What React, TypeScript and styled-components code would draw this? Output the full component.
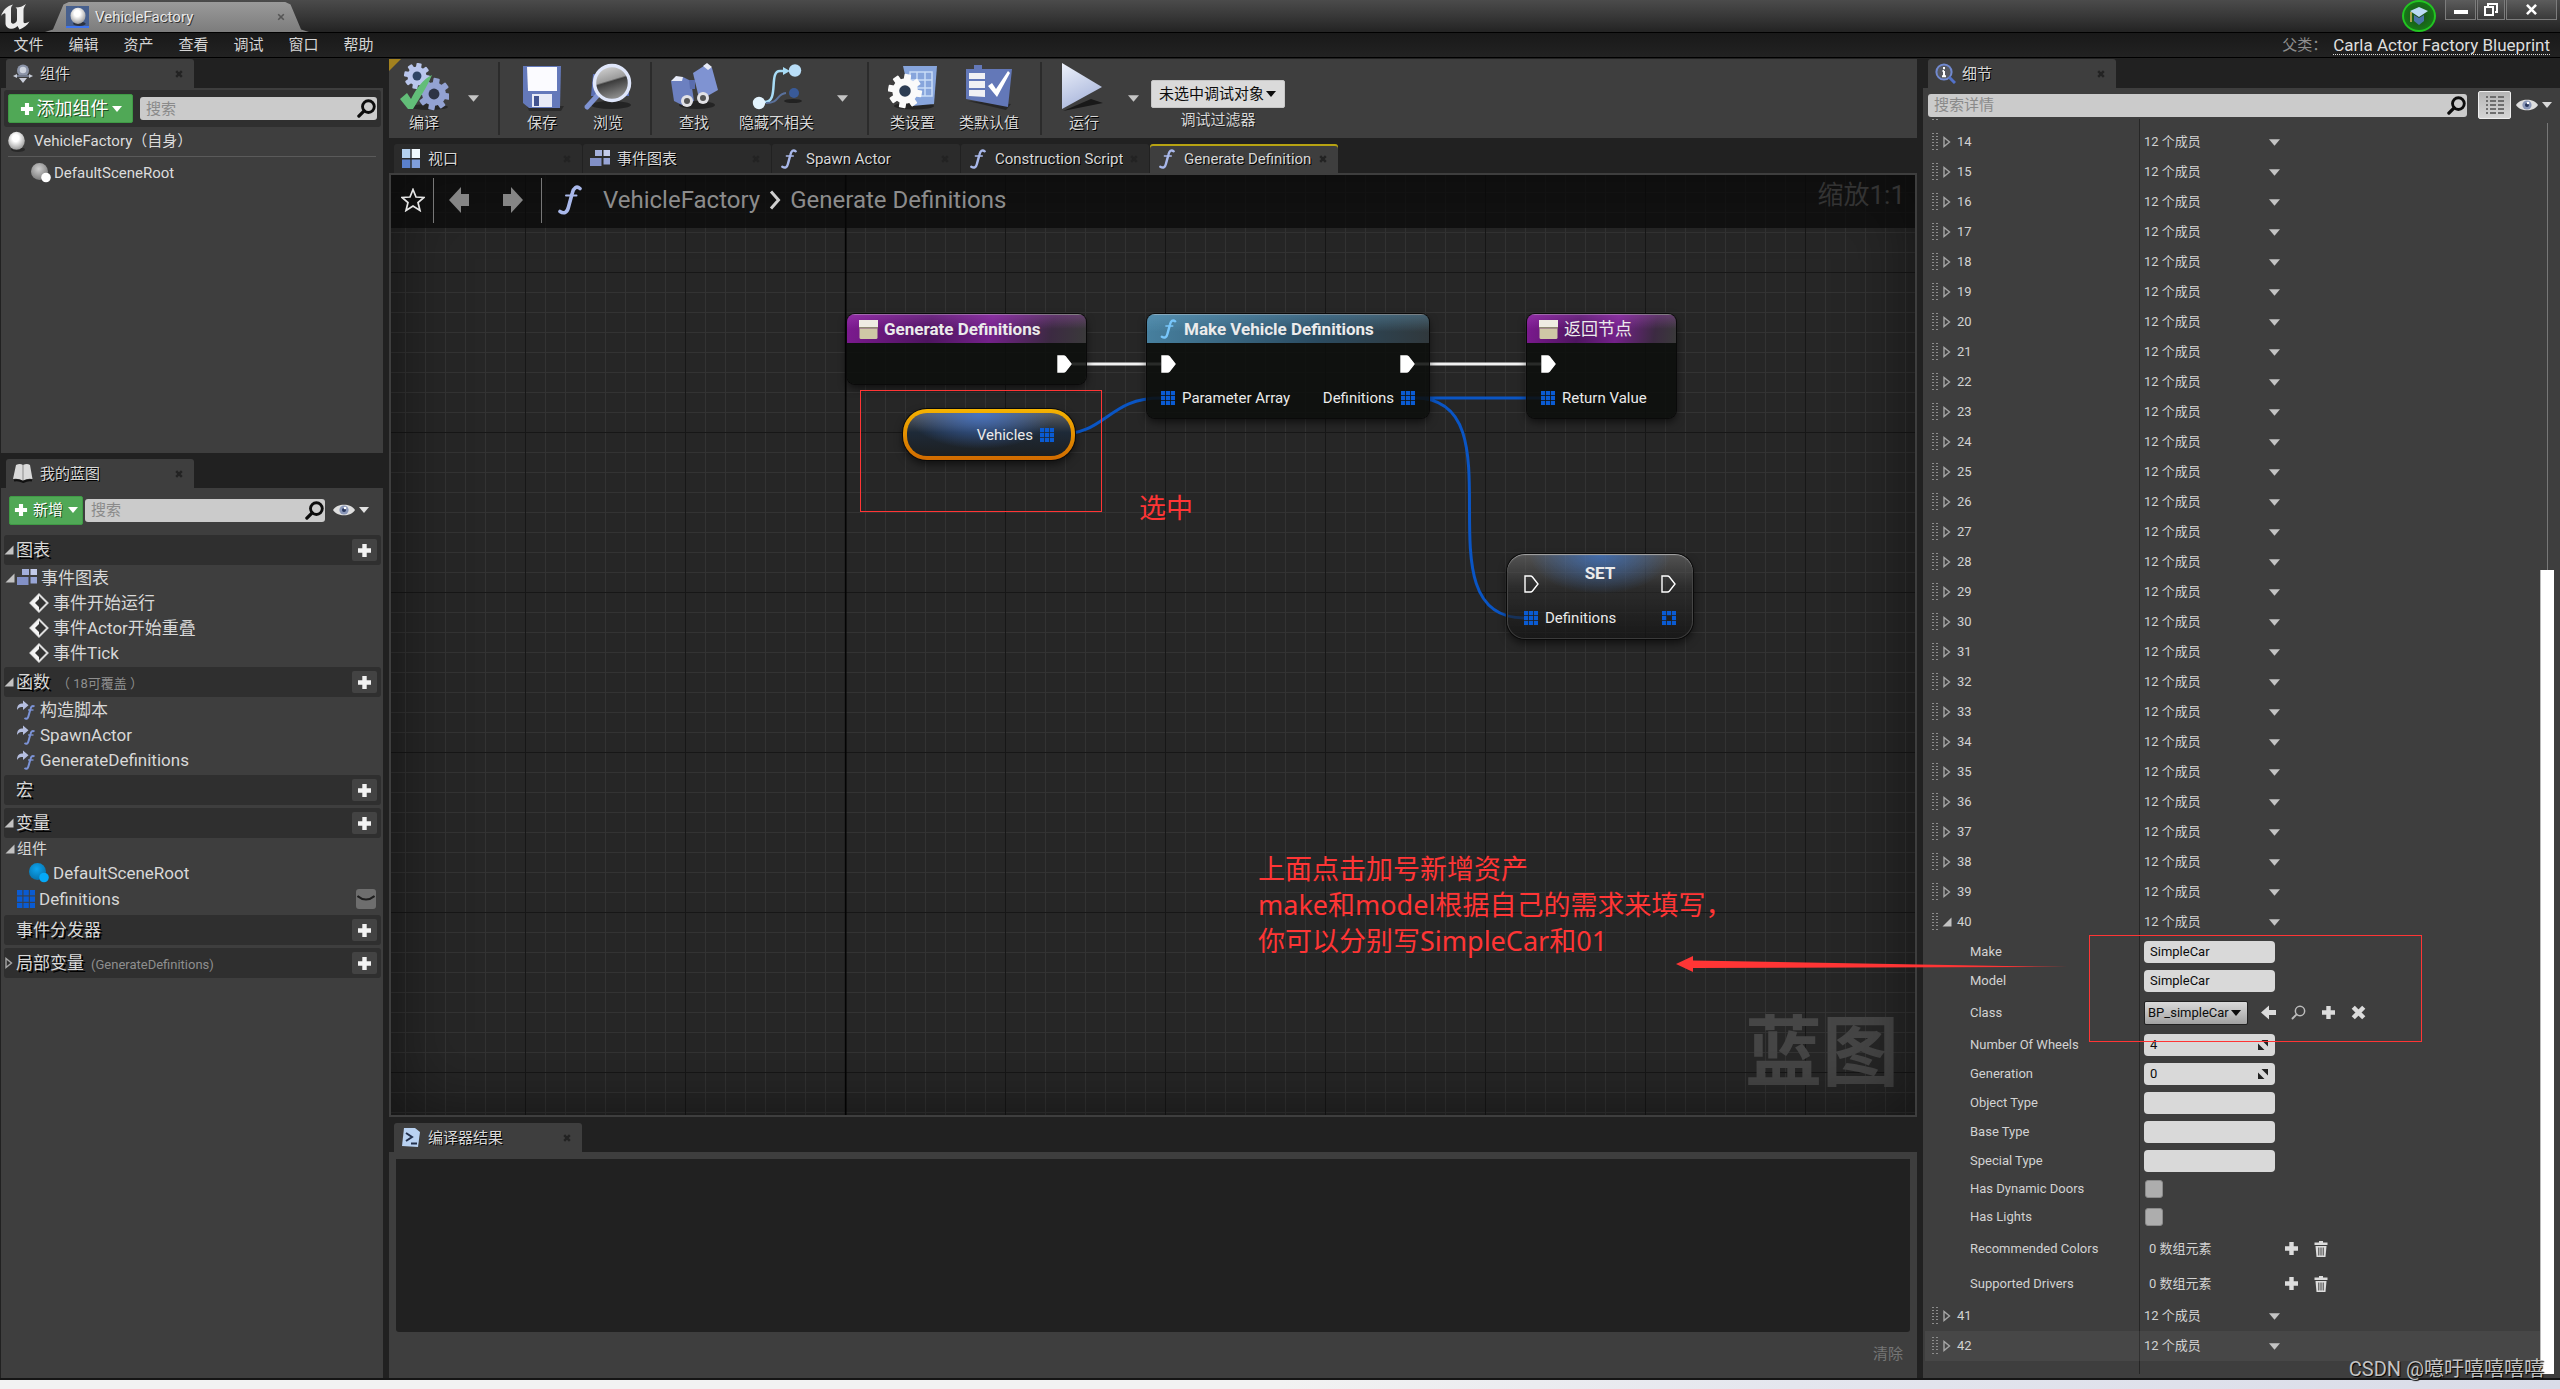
import React, { useId } from 'react';
import styled, { createGlobalStyle, css } from 'styled-components';

const GlobalStyle = createGlobalStyle`
  *, *::before, *::after { box-sizing: border-box; }
  body {
    margin: 0;
    background: #212121;
    color: #d8d8d8;
    font-family: Roboto, "Noto Sans CJK SC", sans-serif;
    font-size: 15px;
    line-height: 20px;
  }
  button, input, select { font: inherit; color: inherit; margin: 0; }
  button { padding: 0; border: 0; background: none; cursor: pointer; }
  svg { display: block; flex: none; }
`;

/* ---------- icons ---------- */

const Caret = ({ size = 12, color = '#c4c4c4' }: { size?: number; color?: string }) => (
  <svg width={size} height={size} viewBox="0 0 12 12"><path d="M0 2.5h12L6 9.5z" fill={color} /></svg>
);

const Plus = ({ size = 15, color = '#f2f2f2' }: { size?: number; color?: string }) => (
  <svg width={size} height={size} viewBox="0 0 15 15">
    <path d="M5.3 1h4.4v4.3H14v4.4H9.7V14H5.3V9.7H1V5.3h4.3z" fill={color} />
  </svg>
);

const Cross = ({ size = 9, color = '#232323', width = 3 }: { size?: number; color?: string; width?: number }) => (
  <svg width={size} height={size} viewBox="0 0 10 10"><path d="M1.5 1.5l7 7M8.5 1.5l-7 7" stroke={color} strokeWidth={width} /></svg>
);

const Magnifier = ({ size = 19, color = '#0c0c0c', width = 3 }: { size?: number; color?: string; width?: number }) => (
  <svg width={size} height={size} viewBox="0 0 20 20" fill="none" stroke={color} strokeWidth={width}>
    <circle cx="12" cy="8" r="6.2" />
    <path d="M7.5 12.5L2 18" strokeWidth={width + 0.5} strokeLinecap="round" />
  </svg>
);

const Eye = () => (
  <svg width="22" height="14" viewBox="0 0 22 14">
    <path d="M0 7C4 0 18 0 22 7C18 14 4 14 0 7z" fill="#dedede" />
    <circle cx="11" cy="7" r="4.6" fill="#8a97b8" />
    <circle cx="11" cy="7" r="2" fill="#26355c" />
    <circle cx="12" cy="5" r="1.3" fill="#fff" />
  </svg>
);

const FuncIcon = ({ w = 18, h = 22, color = '#a9b8ea' }: { w?: number; h?: number; color?: string }) => (
  <svg width={w} height={h} viewBox="0 0 24 30" fill="none" stroke={color} strokeLinecap="round">
    <path d="M22 3.5C18.5 0.5 15.5 3 14.3 8L10.5 22C9.3 27 6.5 29.5 2 26.5" strokeWidth="3.6" />
    <path d="M8 10.5h10.5" strokeWidth="2" />
  </svg>
);

const FuncArrowIcon = () => (
  <svg width="20" height="20" viewBox="0 0 20 20" fill="none">
    <path d="M1 10C1 5 3 3.5 7 3.5V0.5L12.5 5.3L7 10V7C4 7 2.5 7.5 1 10z" fill="#b6bfe0" />
    <path d="M18.5 6.5C16 5 15 7 14.5 9L12.5 16C12 18.5 10.5 19.5 8.5 18" stroke="#7c93d6" strokeWidth="2" />
    <path d="M12 10h5.5" stroke="#7c93d6" strokeWidth="1.3" />
  </svg>
);

const GraphIcon = () => (
  <svg width="20" height="17" viewBox="0 0 20 17">
    <rect x="5" y="0" width="7" height="6" fill="#a4b0dc" />
    <rect x="13.5" y="0" width="6.5" height="6" fill="#c3cbea" />
    <rect x="0" y="8" width="11.5" height="8" fill="#8290c6" />
    <rect x="13.5" y="8" width="6.5" height="6.5" fill="#98a5d6" />
  </svg>
);

const ViewportIcon = () => (
  <svg width="18" height="19" viewBox="0 0 18 19">
    <rect width="8.3" height="9" fill="#b4d0ee" />
    <rect x="9.7" width="8.3" height="9" fill="#f2faff" />
    <rect y="10.5" width="8.3" height="8.5" fill="#5a80cc" />
    <rect x="9.7" y="10.5" width="8.3" height="8.5" fill="#7f9edb" />
  </svg>
);

const ArrayIcon = ({ size = 14, hollow = false }: { size?: number; hollow?: boolean }) => (
  <svg width={size} height={size} viewBox="0 0 14 14" fill="#0a5bd3">
    {[0, 1, 2].map((r) =>
      [0, 1, 2].map((c) =>
        hollow && r === 1 && c === 1 ? null : <rect key={`${r}${c}`} x={c * 5} y={r * 5} width="4.2" height="4.2" />,
      ),
    )}
  </svg>
);

const ExecPin = ({ open = false }: { open?: boolean }) => (
  <svg width="15" height="18" viewBox="0 0 15 18">
    <path
      d="M1 1h5.5c1 0 1.5 0.4 2 1L14 9l-5.5 7c-0.500 0.600-1 1-2 1H1z"
      fill={open ? 'none' : '#fff'} stroke="#fff" strokeWidth="1.4"
    />
  </svg>
);

const BoxIcon = () => (
  <svg width="19" height="19" viewBox="0 0 19 19">
    <rect width="19" height="7" fill="#efece2" />
    <rect y="7" width="19" height="1.5" fill="#8d8870" />
    <path d="M0.500 8.500h18V17.500q0 1.500-1.500 1.500H2q-1.500 0-1.500-1.500z" fill="#cfc8a6" />
  </svg>
);

const Sphere = ({ w = 17, h = 21 }: { w?: number; h?: number }) => (
  <svg width={w} height={h} viewBox="0 0 17 21">
    <defs>
      <radialGradient id="sphere" cx="0.45" cy="0.35" r="0.65">
        <stop offset="0.3" stopColor="#fff" /><stop offset="1" stopColor="#9a9a9a" />
      </radialGradient>
    </defs>
    <ellipse cx="10" cy="18.5" rx="7" ry="2.5" fill="#1f1f1f" opacity="0.7" />
    <ellipse cx="8.5" cy="9.8" rx="8.3" ry="9" fill="url(#sphere)" />
  </svg>
);

const SceneRootIcon = ({ blue = false }: { blue?: boolean }) => (
  <svg width="20" height="20" viewBox="0 0 20 20">
    <defs>
      <radialGradient id="rootBlue" cx="0.45" cy="0.35" r="0.65"><stop offset="0" stopColor="#0ea5ef" /><stop offset="1" stopColor="#0672ad" /></radialGradient>
      <radialGradient id="rootGray" cx="0.45" cy="0.35" r="0.65"><stop offset="0" stopColor="#cfcfcf" /><stop offset="1" stopColor="#7c7c7c" /></radialGradient>
    </defs>
    <circle cx="8.5" cy="8.5" r="8.5" fill={blue ? 'url(#rootBlue)' : 'url(#rootGray)'} />
    <circle cx="15" cy="14.5" r="4.8" fill={blue ? '#05a8f8' : '#fff'} />
  </svg>
);

const EventIcon = () => (
  <svg width="20" height="20" viewBox="0 0 20 20">
    <path d="M10 1.5L18.5 10L10 18.5L1.5 10z" fill="#333" stroke="#dcdcdc" strokeWidth="2" />
    <path d="M10 1.5V6L6 10l4 4v4.5L1.5 10z" fill="#f4f4f4" />
  </svg>
);

const Expander = ({ open = false }: { open?: boolean }) =>
  open ? (
    <svg width="10" height="10" viewBox="0 0 10 10"><path d="M9.5 0.5V9.5H0.5z" fill="#c2c2c2" /></svg>
  ) : (
    <svg width="10" height="12" viewBox="0 0 10 12"><path d="M2 1.5v9L7.5 6z" fill="none" stroke="#a6a6a6" strokeWidth="1.4" /></svg>
  );

const Gear = ({ cx, cy, r, fill, hole }: { cx: number; cy: number; r: number; fill: string; hole: string }) => (
  <g transform={`translate(${cx} ${cy})`}>
    {[0, 45, 90, 135].map((a) => (
      <rect key={a} x={-r * 0.2} y={-r} width={r * 0.4} height={r * 2} rx="1" fill={fill} transform={`rotate(${a + 10})`} />
    ))}
    <circle r={r * 0.74} fill={fill} />
    <circle r={r * 0.34} fill={hole} />
  </g>
);

const CompileIcon = () => (
  <svg width="50" height="48" viewBox="0 0 50 48">
    <ellipse cx="30" cy="44" rx="19" ry="3" fill="#1e1e1e" opacity="0.7" />
    <Gear cx={18} cy={13} r={13} fill="#b9c6ec" hole="#2f4565" />
    <Gear cx={35} cy={31} r={16} fill="#93a2d2" hole="#2d3346" />
    <path d="M1 36l7-6l4 6C17 26 24 16 33 12C28 24 20 36 14 46H9z" fill="#62bd78" />
  </svg>
);
const SaveIcon = () => (
  <svg width="46" height="48" viewBox="0 0 46 48">
    <path d="M8 43h37l-3 5H10z" fill="#222" opacity="0.7" />
    <path d="M4 3h38l-1 42H10l-6-5z" fill="#6479ba" />
    <path d="M8 4h30v24H9z" fill="#fbfbff" />
    <path d="M13 31h20v13H13z" fill="#e8ebf6" /><path d="M15 33h5v10h-5z" fill="#43548f" />
  </svg>
);
const BrowseIcon = () => (
  <svg width="50" height="48" viewBox="0 0 50 48">
    <defs>
      <linearGradient id="lens" x1="0" y1="0" x2="0.3" y2="1"><stop offset="0" stopColor="#dedede" /><stop offset="0.5" stopColor="#9c9c9c" /><stop offset="0.55" stopColor="#3c3c3c" /><stop offset="1" stopColor="#8a8a8a" /></linearGradient>
    </defs>
    <ellipse cx="28" cy="42" rx="20" ry="4" fill="#1e1e1e" opacity="0.8" />
    <path d="M10 11h36v22H8z" fill="#5a6fb4" />
    <path d="M14 33L4 44" stroke="#7f93d2" strokeWidth="5" strokeLinecap="round" />
    <circle cx="29" cy="20" r="17.5" fill="url(#lens)" stroke="#dfe6fa" strokeWidth="3.5" />
  </svg>
);
const FindIcon = () => (
  <svg width="50" height="48" viewBox="0 0 50 48">
    <ellipse cx="28" cy="42" rx="18" ry="4" fill="#1e1e1e" opacity="0.8" />
    <path d="M2 18l12-4l8 4l3 20l-12 4l-8-4z" fill="#6c80c0" />
    <path d="M24 10l14-9l5 4l6 22l-14 8l-6-4z" fill="#7f93d2" />
    <path d="M20 17h6v9h-5z" fill="#5a6dad" />
    <path d="M2 18l5-5l7 1l-1 4zM34 3l4-3l5 4l-4 3z" fill="#e7ebf8" />
    <circle cx="18" cy="38" r="6" fill="#e2e2e6" /><circle cx="18" cy="38" r="3" fill="#555" />
    <circle cx="34" cy="35" r="6" fill="#e2e2e6" /><circle cx="34" cy="35" r="3" fill="#555" />
  </svg>
);
const HideIcon = () => (
  <svg width="50" height="48" viewBox="0 0 50 48" fill="none">
    <path d="M12 39C28 40 16 8 28 8h6" stroke="#a8dcf6" strokeWidth="2.5" />
    <path d="M31 4l7 4l-7 4z" fill="#a8dcf6" />
    <path d="M14 40C28 40 24 31 34 30" stroke="#5a719c" strokeWidth="2" />
    <circle cx="7" cy="40" r="6.2" fill="#e3f3fd" /><circle cx="43" cy="7.5" r="6.2" fill="#b9def8" />
    <circle cx="42" cy="30" r="5" fill="#395a98" />
    <ellipse cx="41" cy="38" rx="9" ry="2" fill="#222" />
  </svg>
);
const SettingsIcon = () => (
  <svg width="50" height="48" viewBox="0 0 50 48">
    <ellipse cx="26" cy="43" rx="20" ry="3.5" fill="#1e1e1e" opacity="0.8" />
    <path d="M15 3h34l-3 38l-22 2z" fill="#87a5dc" />
    <path d="M22 9h22v24H22zM22 17h22M22 25h22M29 9v24M37 9v24" fill="none" stroke="#c9dcf6" strokeWidth="1.5" />
    <Gear cx={17} cy={28} r={17} fill="#fafafa" hole="#2c3c52" />
  </svg>
);
const DefaultsIcon = () => (
  <svg width="50" height="48" viewBox="0 0 50 48">
    <path d="M4 38l38 9l5-6z" fill="#1e1e1e" opacity="0.7" />
    <path d="M2 6h8V2h8v4h30l-4 38L2 36z" fill="#6378b8" />
    <path d="M5 10h16v6H5zM5 18h16v7H5zM5 27h16v7l-16-1z" fill="#f0f0f4" />
    <path d="M24 23l4-3l4 6L44 8l2 2L33 34z" fill="#fff" />
  </svg>
);
const PlayIcon = () => (
  <svg width="46" height="48" viewBox="0 0 46 48">
    <defs><linearGradient id="play" x1="0" y1="0" x2="0.4" y2="1"><stop offset="0" stopColor="#eef2fb" /><stop offset="1" stopColor="#aab7dc" /></linearGradient></defs>
    <path d="M2 48l40-8l-12-4z" fill="#191919" />
    <path d="M1 0L41 24L1 46z" fill="url(#play)" />
  </svg>
);

const UnrealLogo = () => (
  <svg width="30" height="26" viewBox="0 0 30 26">
    <path
      d="M0 12C2 6 6 2 12 0.5C10.5 2 10 3.5 10 5.5V17.5C10 19.5 12 20.5 14 19C15.5 18 16 17 16 15.5V6C16 4.5 15.5 4 14.5 3.5C19 3.5 21.5 2.5 25 0C23.5 2.5 22.5 4 22.5 6V17.5C22.5 19.5 24 20 28.5 17.5C26 21.5 23 23.5 18.5 25.5L16.5 22C14.5 24 13 24.5 11 24.8C7 24.8 4.5 22.5 4.5 19.5V10.5C4.5 8.5 2.5 9 0 12z"
      fill="#ededed"
    />
  </svg>
);

const ComponentsIcon = () => (
  <svg width="20" height="19" viewBox="0 0 20 19">
    <circle cx="10" cy="6.5" r="6" fill="#8b94a8" /><circle cx="10" cy="6" r="3.3" fill="#cdd3de" />
    <path d="M0 12l4-2v4zM20 12l-4-2v4zM6 14h8l-4 5z" fill="#c9ced9" />
    <path d="M4 12h12" stroke="#717a8c" strokeWidth="2" />
  </svg>
);
const BookIcon = () => (
  <svg width="20" height="19" viewBox="0 0 20 19">
    <path d="M0 15L3 1q4-2 7 0q4-2 7 0l2.5 14q-5-1-9.5 1.5q-5-2.5-10-1.5z" fill="#dadada" />
    <path d="M10 1v15" stroke="#8b8b8b" /><path d="M1 16.5q5-1 9 1.5q5-2.5 9-1.5" stroke="#111" strokeWidth="2" fill="none" />
  </svg>
);
const InfoIcon = () => (
  <svg width="21" height="21" viewBox="0 0 21 21" fill="none">
    <circle cx="9" cy="9" r="7.6" fill="#55585f" stroke="#7189cf" strokeWidth="2" />
    <path d="M14 14l6 6" stroke="#5271c8" strokeWidth="3" />
    <path d="M9 8v5M9 4v2.3M7 13.2h4M7.5 8H9" stroke="#fff" strokeWidth="2" />
  </svg>
);
const LogIcon = () => (
  <svg width="18" height="20" viewBox="0 0 18 20" fill="none">
    <path d="M2 0h11l5 4l-2 15L0 18z" fill="#b9d2f2" />
    <path d="M4 5l6 4l-6 4" stroke="#22304c" strokeWidth="2" /><path d="M9 15.5h6" stroke="#22304c" strokeWidth="2" />
  </svg>
);
const Star = () => (
  <svg width="24" height="24" viewBox="0 0 24 24">
    <path d="M12 1.5l3 7.5l8 0.5l-6 5l2 8l-7-4.5l-7 4.5l2-8l-6-5l8-0.5z" fill="none" stroke="#e6e6e6" strokeWidth="1.7" />
  </svg>
);
const NavArrow = ({ back = false }: { back?: boolean }) => (
  <svg width="21" height="28" viewBox="0 0 21 28">
    <path d={back ? 'M0 14L12 1V8H20V20H12V27z' : 'M21 14L9 1V8H1V20H9V27z'} fill="#858585" />
  </svg>
);
const Chevron = () => (
  <svg width="12" height="20" viewBox="0 0 12 20"><path d="M2 1.5L9.5 10L2 18.5" stroke="#cfcfcf" strokeWidth="3" fill="none" /></svg>
);
const UseArrow = () => (
  <svg width="15" height="15" viewBox="0 0 15 15"><path d="M0 7.5L8 0.5V5H15V10H8V14.5z" fill="#dcdcdc" /></svg>
);
const Trash = () => (
  <svg width="14" height="16" viewBox="0 0 14 16">
    <path d="M5 0h4v1.5h4.5V4h-13V1.5H5z" fill="#dcdcdc" />
    <path d="M1.5 5h11l-1 11h-9z" fill="#dcdcdc" /><path d="M4.8 6.5v8M7 6.5v8M9.2 6.5v8" stroke="#3e3e3e" />
  </svg>
);
const Spin = () => (
  <svg width="12" height="12" viewBox="0 0 12 12"><path d="M4.5 1H11V7.5zM1 4.5V11H7.5z" fill="#222" /></svg>
);
const DragHandle = () => (
  <svg width="6" height="18" viewBox="0 0 6 18" fill="#8d8d8d">
    {[0, 3, 6, 9, 12, 16].map((y) => <path key={y} d={`M0 ${y}h2v1h-2zM4 ${y}h2v1h-2z`} />)}
  </svg>
);
const GridIcon = () => (
  <svg width="18" height="18" viewBox="0 0 18 18" fill="#6e6e6e">
    {[0, 4, 8, 12, 16].map((y) => <path key={y} d={`M0 ${y}h2v2h-2zM4 ${y}h6v2h-6zM12 ${y}h6v2h-6z`} />)}
  </svg>
);

/* ---------- frame ---------- */

const Window = styled.div`
  position: relative;
  display: flex;
  flex-direction: column;
  min-height: 100vh;
  overflow: hidden;
`;

const TitleBar = styled.header`
  display: flex;
  align-items: flex-start;
  height: 33px;
  padding-left: 1px;
  border-bottom: 1px solid #000;
  background: linear-gradient(#4b4b4b, #383838 50%, #232323);
`;
const LogoBox = styled.div`padding-top: 4px; width: 44px;`;
const DocTab = styled.div`
  display: flex;
  align-items: center;
  gap: 6px;
  width: 264px;
  height: 30px;
  margin-top: 2px;
  padding: 0 24px 0 21px;
  background: linear-gradient(#9a9a9a, #7c7c7c);
  clip-path: polygon(0 100%, 3% 92%, 7% 8%, 9% 0, 91% 0, 93% 8%, 97% 92%, 100% 100%);
  color: #e9e9e9;
  text-shadow: 1px 1px 0 #333;
  & > span { flex: 1; }
`;
const DocIcon = styled.div`
  display: grid;
  place-items: center;
  width: 23px;
  height: 22px;
  background: #47608e;
  border-bottom: 2px solid #3d74ee;
`;
const TitleRight = styled.div`display: flex; align-items: flex-start; margin-left: auto; padding-right: 3px;`;
const Tutorial = styled.button`
  display: grid;
  place-items: center;
  width: 34px;
  height: 32px;
  margin-right: 8px;
  border-radius: 50%;
  border: 2px solid #22c522;
  background: radial-gradient(#1d4a1d, #148a14);
`;
const WinButton = styled.button<{ $w: number }>`
  display: grid;
  place-items: center;
  width: ${(p) => p.$w}px;
  height: 20px;
  margin-left: 1px;
  border: 1px solid #7c7c7c;
  border-top: 0;
  background: linear-gradient(#5c5c5c, #3a3a3a);
`;

const MenuBar = styled.nav`
  display: flex;
  align-items: center;
  height: 25px;
  padding: 0 10px 0 1px;
  border-bottom: 1px solid #000;
  background: linear-gradient(#191919, #222);
`;
const MenuItem = styled.button`width: 55px; color: #d6d6d6;`;
const ParentClass = styled.div`
  display: flex;
  align-items: center;
  gap: 6px;
  margin-left: auto;
  color: #8d8d8d;
  a {
    color: #dedede;
    font-size: 17px;
    line-height: 18px;
    text-decoration: none;
    border-bottom: 1px dotted #dedede;
  }
`;

const Workspace = styled.main`
  flex: 1;
  display: grid;
  grid-template-columns: 382px minmax(0, 1fr) 637px;
  gap: 6px;
  padding: 1px 0 0 1px;
  border-bottom: 2px solid #151515;
`;
const Column = styled.div`display: flex; flex-direction: column; gap: 6px; min-width: 0;`;
const BottomStrip = styled.div`height: 9px; background: linear-gradient(90deg, #f2f2f2 50%, #e4e6ee 70%, #d9dce8);`;

const Panel = styled.section<{ $grow?: boolean; $h?: number }>`
  display: flex;
  flex-direction: column;
  min-height: 0;
  ${(p) => (p.$grow ? css`flex: 1;` : css`flex: 0 0 ${p.$h}px;`)}
`;
const TabStrip = styled.div`display: flex; gap: 1px; padding-left: 5px;`;
const Tab = styled.div<{ $idle?: boolean; $accent?: boolean }>`
  display: flex;
  align-items: center;
  gap: 7px;
  width: 188px;
  height: 29px;
  padding: 0 11px 0 7px;
  border-radius: 3px 3px 0 0;
  background: ${(p) => (p.$idle ? '#2b2b2b' : '#3e3e3e')};
  box-shadow: ${(p) => (p.$accent ? 'inset 0 2px 0 #b7a312' : 'none')};
  text-shadow: 1px 1px 0 #000;
  & > span { flex: 1; overflow: hidden; white-space: nowrap; }
`;
const TabGlyph = styled.div`display: flex; justify-content: center; width: 20px;`;
const PanelBody = styled.div`
  flex: 1;
  display: flex;
  flex-direction: column;
  min-height: 0;
  background: #3e3e3e;
`;

const PanelTab = ({ icon, title, idle, accent }: { icon: React.ReactNode; title: string; idle?: boolean; accent?: boolean }) => (
  <Tab $idle={idle} $accent={accent}>
    <TabGlyph>{icon}</TabGlyph>
    <span>{title}</span>
    <button aria-label="关闭"><Cross size={8} /></button>
  </Tab>
);

/* ---------- shared controls ---------- */

const SearchBox = styled.label`
  flex: 1;
  display: flex;
  align-items: center;
  height: 23px;
  min-width: 0;
  padding: 0 1px 0 6px;
  border-radius: 3px;
  background: #cbcbcb;
  input {
    flex: 1;
    min-width: 0;
    padding: 0;
    border: 0;
    outline: 0;
    background: none;
    color: #222;
  }
  input::placeholder { color: #8a8a8a; opacity: 1; }
`;
const Search = ({ hint }: { hint: string }) => (
  <SearchBox><input type="text" placeholder={hint} aria-label={hint} /><Magnifier /></SearchBox>
);

const GreenButton = styled.button<{ $large?: boolean }>`
  display: flex;
  align-items: center;
  justify-content: center;
  gap: ${(p) => (p.$large ? 3 : 5)}px;
  width: ${(p) => (p.$large ? 125 : 74)}px;
  height: 29px;
  border: 1px solid #3f9a45;
  border-radius: 2px;
  background: #50a856;
  color: #fff;
  font-size: ${(p) => (p.$large ? 18 : 15)}px;
  text-shadow: 1px 1px 0 #1d4d20;
`;
const EyeButton = styled.button`display: flex; align-items: center; gap: 4px;`;

/* ---------- components panel ---------- */

const ComponentsBar = styled.div`
  display: flex;
  align-items: center;
  gap: 7px;
  height: 37px;
  margin: 2px 2px 0 3px;
  padding: 0 4px;
  border-radius: 3px;
  background: #2f2f2f;
`;
const TreeRow = styled.div<{ $indent: number }>`
  display: flex;
  align-items: center;
  gap: ${(p) => (p.$indent > 10 ? 3 : 9)}px;
  height: 28px;
  padding-left: ${(p) => p.$indent}px;
  color: #dcdcdc;
`;
const Rule = styled.hr`width: calc(100% - 14px); height: 1px; margin: 1px 7px 2px; border: 0; background: #5a5a5a;`;

/* ---------- my blueprint ---------- */

const BlueprintBar = styled.div`
  display: flex;
  align-items: center;
  gap: 2px;
  height: 30px;
  margin: 7px 14px 10px 8px;
  ${EyeButton} { margin-left: 6px; }
`;
const Section = styled.div<{ $gap: number }>`
  display: flex;
  align-items: center;
  height: 30px;
  margin: ${(p) => p.$gap}px 2px 0 3px;
  padding-right: 4px;
  border-radius: 3px;
  background: #2f2f2f;
  font-size: 17px;
  text-shadow: 2px 2px 0 #000;
  small { margin-left: 7px; font-size: 13px; color: #8e8e8e; text-shadow: none; padding-top: 4px; }
`;
const SectionArrow = styled.div`display: flex; width: 12px;`;
const AddButton = styled.button`
  display: grid;
  place-items: center;
  width: 25px;
  height: 22px;
  margin-left: auto;
  border-radius: 2px;
  background: #434343;
`;
const Item = styled.div<{ $indent: number; $h?: number; $small?: boolean }>`
  display: flex;
  align-items: center;
  gap: 4px;
  height: ${(p) => p.$h ?? 25}px;
  padding: 0 7px 0 ${(p) => p.$indent}px;
  font-size: ${(p) => (p.$small ? 15 : 17)}px;
  white-space: nowrap;
`;
const TwistItem = styled(Item)`
  gap: 2px;
  & > svg + svg + span { margin-left: 2px; }
`;
const LidButton = styled.button`
  display: grid;
  place-items: center;
  width: 20px;
  height: 20px;
  margin-left: auto;
  border-radius: 3px;
  background: #6e6e6e;
`;

const SectionHead = ({ title, note, gap = 0, arrow }: { title: string; note?: string; gap?: number; arrow?: 'open' | 'closed' }) => (
  <Section $gap={gap}>
    <SectionArrow>{arrow && <Expander open={arrow === 'open'} />}</SectionArrow>
    <span>{title}</span>
    {note && <small>{note}</small>}
    <AddButton aria-label={`新增${title}`}><Plus /></AddButton>
  </Section>
);

/* ---------- toolbar ---------- */

const Toolbar = styled.div`
  position: relative;
  display: flex;
  align-items: center;
  height: 79px;
  padding-left: 2px;
  background: #3e3e3e;
  &::before {
    content: '';
    position: absolute;
    left: 0;
    top: 0;
    border-top: 12px solid #a3821f;
    border-right: 12px solid transparent;
  }
`;
const ToolButton = styled.button`
  align-self: stretch;
  display: flex;
  flex-direction: column;
  align-items: center;
  gap: 2px;
  min-width: 66px;
  padding: 4px 12px 0;
  white-space: nowrap;
  text-shadow: 1px 1px 0 #000;
  & > svg { margin: 0 -8px; }
`;
const ToolArrow = styled.button`display: grid; place-items: center; width: 32px; height: 60px;`;
const ToolRule = styled.div`width: 2px; height: 73px; margin: 0 9px; background: #2b2b2b;`;
const DebugBox = styled.div`
  display: flex;
  flex-direction: column;
  align-items: center;
  gap: 2px;
  margin: 13px 0 0 2px;
  text-shadow: 1px 1px 0 #222;
`;
const SelectBox = styled.div<{ $w: number; $h: number; $shade?: boolean }>`
  display: flex;
  align-items: center;
  width: ${(p) => p.$w}px;
  height: ${(p) => p.$h}px;
  padding: ${(p) => (p.$shade ? '0 6px 0 3px' : '0 8px 0 7px')};
  border: 1px solid ${(p) => (p.$shade ? '#222' : '#c6c6c6')};
  border-radius: 2px;
  background: ${(p) => (p.$shade ? 'linear-gradient(#dadada, #a2a2a2)' : '#dadada')};
  color: #0c0c0c;
  text-shadow: none;
  select {
    flex: 1;
    min-width: 0;
    padding: 0;
    border: 0;
    outline: 0;
    appearance: none;
    background: none;
  }
`;

const Tool = ({ icon, label }: { icon: React.ReactNode; label: string }) => <ToolButton>{icon}{label}</ToolButton>;

/* ---------- graph ---------- */

const GraphFrame = styled.div`
  position: relative;
  flex: 1;
  border: 2px solid #3e3e3e;
  background-color: #262626;
  background-image:
    linear-gradient(90deg, #000 1px, transparent 1px),
    linear-gradient(90deg, #171717 1px, transparent 1px),
    linear-gradient(#171717 1px, transparent 1px),
    linear-gradient(90deg, #333 1px, transparent 1px),
    linear-gradient(#333 1px, transparent 1px);
  background-size: 9999px 100%, 160px 160px, 160px 160px, 20px 20px, 20px 20px;
  background-position: 454px 0, 134px 0, 0 97px, 14px 0, 0 17px;
  overflow: hidden;
  &::after {
    content: '';
    position: absolute;
    inset: 0;
    box-shadow: inset 0 0 70px rgba(0, 0, 0, 0.5);
    pointer-events: none;
  }
`;
const Crumbs = styled.div`
  position: relative;
  z-index: 1;
  display: flex;
  align-items: center;
  height: 53px;
  padding: 0 10px 3px;
  background: rgba(8, 8, 8, 0.7);
  font-size: 24px;
  line-height: 30px;
  color: #8c8c8c;
  white-space: nowrap;
`;
const CrumbRule = styled.div`width: 1px; height: 45px; margin: 0 15px 0 8px; background: #777;`;
const CrumbNav = styled.div`display: flex; gap: 32px; padding-right: 10px;`;
const CrumbPath = styled.div`
  display: flex;
  align-items: center;
  gap: 9px;
  & > svg:first-child { margin: 0 12px 0 1px; }
`;
const Zoom = styled.div`align-self: flex-start; margin-left: auto; padding-top: 5px; font-size: 26px; color: #333;`;
const Wires = styled.svg`position: absolute; left: 0; top: 0; width: 100%; height: 100%;`;

const Node = styled.div<{ $x: number; $y: number; $w: number; $pill?: boolean }>`
  position: absolute;
  left: ${(p) => p.$x}px;
  top: ${(p) => p.$y}px;
  width: ${(p) => p.$w}px;
  border-radius: ${(p) => (p.$pill ? 18 : 8)}px;
  background: rgba(13, 15, 12, 0.88);
  box-shadow: 0 0 0 1px #0a0a0a, 0 4px 8px rgba(0, 0, 0, 0.6);
  color: #ebebeb;
  overflow: hidden;
`;
const NodeHead = styled.div<{ $tone: 'event' | 'call'; $plain?: boolean }>`
  display: flex;
  align-items: center;
  gap: 6px;
  height: 29px;
  padding-left: 12px;
  border-top: 1px solid rgba(255, 255, 255, 0.35);
  background: ${(p) =>
    p.$tone === 'event'
      ? 'linear-gradient(rgba(190, 90, 215, 0.3), transparent 50%), linear-gradient(100deg, #7d1a90 0, #4e1560 35%, #74218a 60%, #3c2a42 85%, #3a3a3a)'
      : 'linear-gradient(rgba(110, 170, 205, 0.35), transparent 60%), linear-gradient(95deg, #47809f, #2b4c62 60%, #30383c)'};
  font-size: 17px;
  font-weight: ${(p) => (p.$plain ? 400 : 700)};
  white-space: nowrap;
`;
const NodeBody = styled.div`padding: 4px 0 3px;`;
const PinRow = styled.div`
  display: flex;
  align-items: center;
  justify-content: space-between;
  height: 34px;
  padding: 0 14px;
`;
const Pin = styled.div`display: flex; align-items: center; gap: 7px; white-space: nowrap;`;

const SetNode = styled(Node)`
  padding: 13px 3px 4px;
  background:
    radial-gradient(ellipse 38% 40px at 50% 0, rgba(60, 120, 210, 0.7), transparent),
    linear-gradient(rgba(120, 120, 120, 0.55), rgba(50, 50, 50, 0.5) 40%, rgba(20, 20, 20, 0.75));
  box-shadow: inset 0 1px 1px #aaa, inset 0 0 0 1px #3a3a3a, 0 0 0 1px #0a0a0a, 0 4px 8px rgba(0, 0, 0, 0.6);
`;
const SetTitle = styled.div`
  position: absolute;
  inset: 9px 0 auto;
  text-align: center;
  font-size: 17px;
  font-weight: 700;
`;
const VarNode = styled(Node)`
  display: flex;
  justify-content: flex-end;
  align-items: center;
  gap: 7px;
  height: 51px;
  padding-right: 17px;
  border: 4px solid transparent;
  border-radius: 24px;
  background:
    radial-gradient(ellipse 45% 36px at 45% 0, rgba(70, 120, 210, 0.85), transparent) padding-box,
    linear-gradient(#5b5e63, #1e2a38 45%, #1d1f20) padding-box,
    linear-gradient(#f5b301, #d06a00) border-box;
`;

const NoteFrame = styled.div<{ $x: number; $y: number; $w: number; $h: number }>`
  position: absolute;
  left: ${(p) => p.$x}px;
  top: ${(p) => p.$y}px;
  width: ${(p) => p.$w}px;
  height: ${(p) => p.$h}px;
  border: 1px solid #ff3535;
  pointer-events: none;
`;
const NoteText = styled.p<{ $x: number; $y: number }>`
  position: absolute;
  left: ${(p) => p.$x}px;
  top: ${(p) => p.$y}px;
  margin: 0;
  font-family: "Noto Sans", "Noto Sans CJK SC", sans-serif;
  font-size: 27px;
  line-height: 36px;
  color: #ff3535;
  white-space: pre;
`;
const NoteArrow = styled.svg`
  position: absolute;
  left: 1676px;
  top: 955px;
  pointer-events: none;
`;
const Mark = styled.div`
  position: absolute;
  right: 16px;
  bottom: 16px;
  font-size: 77px;
  line-height: 90px;
  font-weight: 700;
  color: #464646;
`;

/* ---------- compiler results ---------- */

const LogBody = styled.div`
  flex: 1;
  display: flex;
  flex-direction: column;
  padding: 7px 7px 0;
  background: #3e3e3e;
`;
const LogArea = styled.div`flex: 1; border-radius: 0 0 3px 3px; background: #212121;`;
const ClearButton = styled.button`align-self: flex-end; height: 46px; padding: 0 7px 2px; color: #757575;`;

/* ---------- details ---------- */

const DetailsBar = styled.div`
  display: flex;
  align-items: center;
  height: 31px;
  padding: 3px 8px 0 5px;
`;
const ToggleButton = styled.button`
  display: grid;
  place-items: center;
  width: 33px;
  height: 28px;
  margin: 0 5px 0 11px;
  border: 1px solid #eee;
  border-radius: 2px;
  background: linear-gradient(#b5b5b5, #d5d5d5);
`;
const Scroller = styled.div`flex: 1; display: flex; min-height: 0; overflow: hidden; padding-bottom: 4px;`;
const Props = styled.div`
  flex: 1;
  min-width: 0;
  margin-top: -22px;
  padding-left: 2px;
  background: linear-gradient(#262626, #262626) 216px 0 / 1px 100% no-repeat;
`;
const Track = styled.div`
  display: flex;
  flex-direction: column;
  align-items: center;
  width: 14px;
  margin: 4px 6px 0 0;
  &::before { content: ''; width: 1px; height: 447px; background: #777; }
`;
const Thumb = styled.div`flex: 1; width: 14px; background: #fff; border-left: 1px solid #bbb;`;
const PropRow = styled.div<{ $h: number; $lit?: boolean }>`
  display: grid;
  grid-template-columns: 219px 131px 1fr;
  align-items: center;
  height: ${(p) => p.$h}px;
  font-size: 13px;
  color: #d2d2d2;
  background: ${(p) => (p.$lit ? 'rgba(255, 255, 255, 0.05)' : 'none')};
`;
const IndexCell = styled.div`
  display: flex;
  align-items: center;
  padding-left: 7px;
  & > svg + svg { margin: 0 5px 0 4px; }
`;
const NameCell = styled.label`padding-left: 45px;`;
const MemberCell = styled.div`
  display: grid;
  grid-template-columns: 125px 11px;
  align-items: center;
`;
const ActionCell = styled.div<{ $pad: number }>`
  display: flex;
  align-items: center;
  gap: 15px;
  padding-left: ${(p) => p.$pad}px;
`;
const Field = styled.div`
  display: flex;
  align-items: center;
  height: 22px;
  padding: 0 6px;
  border-radius: 4px;
  background: #d9d9d9;
  color: #0c0c0c;
  input { flex: 1; min-width: 0; padding: 0; border: 0; outline: 0; background: none; }
`;
const Check = styled.input`
  appearance: none;
  display: block;
  width: 18px;
  height: 18px;
  margin-left: 1px;
  border: 1px solid #8a8a8a;
  border-radius: 3px;
  background: #adadad;
`;
const ArrayCount = styled.div`padding-left: 5px;`;
const ClassCell = styled.div`width: 240px; display: flex; align-items: center; gap: 13px;`;

const MemberRow = ({ index, open, lit }: { index: number; open?: boolean; lit?: boolean }) => (
  <PropRow $h={30} $lit={lit}>
    <IndexCell><DragHandle /><Expander open={open} />{index}</IndexCell>
    <MemberCell><span>12 个成员</span><Caret size={11} /></MemberCell>
  </PropRow>
);
const TextRow = ({ name, value = '', numeric }: { name: string; value?: string; numeric?: boolean }) => {
  const id = useId();
  return (
    <PropRow $h={29}>
      <NameCell htmlFor={id}>{name}</NameCell>
      <Field><input id={id} type="text" defaultValue={value} />{numeric && <Spin />}</Field>
    </PropRow>
  );
};
const CheckRow = ({ name }: { name: string }) => {
  const id = useId();
  return (
    <PropRow $h={28}>
      <NameCell htmlFor={id}>{name}</NameCell>
      <Check id={id} type="checkbox" />
    </PropRow>
  );
};
const ArrayRow = ({ name }: { name: string }) => (
  <PropRow $h={35}>
    <NameCell as="div">{name}</NameCell>
    <ArrayCount>0 数组元素</ArrayCount>
    <ActionCell $pad={9}>
      <button aria-label="添加"><Plus color="#dcdcdc" /></button>
      <button aria-label="清空"><Trash /></button>
    </ActionCell>
  </PropRow>
);

const Watermark = styled.div`
  position: absolute;
  right: 16px;
  bottom: 7px;
  font-size: 20px;
  line-height: 26px;
  color: #c4c4c4;
  text-shadow: 1px 1px 1px #000;
`;

const menus = ['文件', '编辑', '资产', '查看', '调试', '窗口', '帮助'];
const collapsed = Array.from({ length: 27 }, (_, i) => i + 13);

export default function App() {
  return (
    <>
      <GlobalStyle />
      <Window>
        <TitleBar>
          <LogoBox><UnrealLogo /></LogoBox>
          <DocTab>
            <DocIcon><Sphere w={16} h={19} /></DocIcon>
            <span>VehicleFactory</span>
            <button aria-label="关闭"><Cross size={8} color="#555" width={2} /></button>
          </DocTab>
          <TitleRight>
            <Tutorial aria-label="教程">
              <svg width="20" height="20" viewBox="0 0 20 20">
                <path d="M1 5l9-4l9 4l-9 6z" fill="#bcdcf4" /><path d="M5 9v6l5 4l5-4V9l-5 3z" fill="#4a75a8" />
                <path d="M2 6v10" stroke="#d8b860" strokeWidth="1.5" />
              </svg>
            </Tutorial>
            <WinButton $w={31} aria-label="最小化">
              <svg width="14" height="12"><rect y="6" width="14" height="4" fill="#fff" /></svg>
            </WinButton>
            <WinButton $w={28} aria-label="还原">
              <svg width="14" height="13" viewBox="0 0 14 13" fill="none" stroke="#fff" strokeWidth="2">
                <path d="M4 3V1h9v8h-2" /><rect x="1" y="4" width="8" height="8" />
              </svg>
            </WinButton>
            <WinButton $w={51} aria-label="关闭窗口"><Cross size={13} color="#fff" width={2} /></WinButton>
          </TitleRight>
        </TitleBar>

        <MenuBar>
          {menus.map((m) => <MenuItem key={m}>{m}</MenuItem>)}
          <ParentClass>父类：<a href="#parent">Carla Actor Factory Blueprint</a></ParentClass>
        </MenuBar>

        <Workspace>
          <Column>
            <Panel $h={394}>
              <TabStrip><PanelTab icon={<ComponentsIcon />} title="组件" /></TabStrip>
              <PanelBody>
                <ComponentsBar>
                  <GreenButton $large><Plus size={14} color="#fff" />添加组件<Caret size={10} color="#fff" /></GreenButton>
                  <Search hint="搜索" />
                </ComponentsBar>
                <TreeRow $indent={7}><Sphere />VehicleFactory（自身）</TreeRow>
                <Rule />
                <TreeRow $indent={30}><SceneRootIcon />DefaultSceneRoot</TreeRow>
              </PanelBody>
            </Panel>

            <Panel $grow>
              <TabStrip><PanelTab icon={<BookIcon />} title="我的蓝图" /></TabStrip>
              <PanelBody>
                <BlueprintBar>
                  <GreenButton><Plus size={14} color="#fff" />新增<Caret size={10} color="#fff" /></GreenButton>
                  <Search hint="搜索" />
                  <EyeButton aria-label="视图选项"><Eye /><Caret size={10} color="#e2e2e2" /></EyeButton>
                </BlueprintBar>
                <SectionHead title="图表" arrow="open" />
                <TwistItem $indent={4}><Expander open /><GraphIcon /><span>事件图表</span></TwistItem>
                <Item $indent={28}><EventIcon />事件开始运行</Item>
                <Item $indent={28}><EventIcon />事件Actor开始重叠</Item>
                <Item $indent={28}><EventIcon />事件Tick</Item>
                <SectionHead title="函数" note="（ 18可覆盖 ）" gap={2} arrow="open" />
                <Item $indent={15}><FuncArrowIcon />构造脚本</Item>
                <Item $indent={15}><FuncArrowIcon />SpawnActor</Item>
                <Item $indent={15}><FuncArrowIcon />GenerateDefinitions</Item>
                <SectionHead title="宏" gap={3} />
                <SectionHead title="变量" gap={3} arrow="open" />
                <TwistItem $indent={4} $h={22} $small><Expander open /><span>组件</span></TwistItem>
                <Item $indent={28} $h={26}><SceneRootIcon blue />DefaultSceneRoot</Item>
                <Item $indent={16} $h={26}>
                  <ArrayIcon size={18} />Definitions
                  <LidButton aria-label="公开">
                    <svg width="18" height="8" viewBox="0 0 18 8"><path d="M0.5 1q8.5 7 17 0" fill="none" stroke="#1e1e1e" strokeWidth="2" /></svg>
                  </LidButton>
                </Item>
                <SectionHead title="事件分发器" gap={3} />
                <SectionHead title="局部变量" note="(GenerateDefinitions)" gap={3} arrow="closed" />
              </PanelBody>
            </Panel>
          </Column>

          <Column>
            <Toolbar>
              <Tool icon={<CompileIcon />} label="编译" />
              <ToolArrow aria-label="编译选项"><Caret size={11} /></ToolArrow>
              <ToolRule />
              <Tool icon={<SaveIcon />} label="保存" />
              <Tool icon={<BrowseIcon />} label="浏览" />
              <ToolRule />
              <Tool icon={<FindIcon />} label="查找" />
              <Tool icon={<HideIcon />} label="隐藏不相关" />
              <ToolArrow aria-label="隐藏选项"><Caret size={11} /></ToolArrow>
              <ToolRule />
              <Tool icon={<SettingsIcon />} label="类设置" />
              <Tool icon={<DefaultsIcon />} label="类默认值" />
              <ToolRule />
              <Tool icon={<PlayIcon />} label="运行" />
              <ToolArrow aria-label="运行选项"><Caret size={11} /></ToolArrow>
              <DebugBox>
                <SelectBox $w={134} $h={28}>
                  <select id="debug-target" defaultValue="none"><option value="none">未选中调试对象</option></select>
                  <Caret size={10} color="#0c0c0c" />
                </SelectBox>
                <label htmlFor="debug-target">调试过滤器</label>
              </DebugBox>
            </Toolbar>

            <Panel $grow>
              <TabStrip>
                <PanelTab idle icon={<ViewportIcon />} title="视口" />
                <PanelTab idle icon={<GraphIcon />} title="事件图表" />
                <PanelTab idle icon={<FuncIcon w={16} h={20} />} title="Spawn Actor" />
                <PanelTab idle icon={<FuncIcon w={16} h={20} />} title="Construction Script" />
                <PanelTab accent icon={<FuncIcon w={16} h={20} />} title="Generate Definitions" />
              </TabStrip>
              <GraphFrame>
                <Crumbs>
                  <button aria-label="收藏"><Star /></button>
                  <CrumbRule />
                  <CrumbNav>
                    <button aria-label="后退"><NavArrow back /></button>
                    <button aria-label="前进"><NavArrow /></button>
                  </CrumbNav>
                  <CrumbRule />
                  <CrumbPath><FuncIcon w={24} h={30} /><span>VehicleFactory</span><Chevron /><span>Generate Definitions</span></CrumbPath>
                  <Zoom>缩放1:1</Zoom>
                </Crumbs>

                <Wires fill="none" strokeWidth="3">
                  <path d="M681 189H770M1024 189H1150" stroke="#f2f2f2" />
                  <path d="M663 260C718 260 715 223 770 223M1024 223H1150M1024 223C1133 223 1024 443 1133 443" stroke="#0a55c4" />
                </Wires>

                <Node $x={456} $y={139} $w={239}>
                  <NodeHead $tone="event"><BoxIcon />Generate Definitions</NodeHead>
                  <NodeBody><PinRow><span /><ExecPin /></PinRow></NodeBody>
                </Node>
                <Node $x={756} $y={139} $w={282}>
                  <NodeHead $tone="call"><FuncIcon w={19} h={20} color="#78c6fa" />Make Vehicle Definitions</NodeHead>
                  <NodeBody>
                    <PinRow><ExecPin /><ExecPin /></PinRow>
                    <PinRow><Pin><ArrayIcon />Parameter Array</Pin><Pin>Definitions<ArrayIcon /></Pin></PinRow>
                  </NodeBody>
                </Node>
                <Node $x={1136} $y={139} $w={149}>
                  <NodeHead $tone="event" $plain><BoxIcon />返回节点</NodeHead>
                  <NodeBody>
                    <PinRow><ExecPin /></PinRow>
                    <PinRow><Pin><ArrayIcon />Return Value</Pin></PinRow>
                  </NodeBody>
                </Node>
                <SetNode $x={1116} $y={379} $w={186} $pill>
                  <SetTitle>SET</SetTitle>
                  <PinRow><ExecPin open /><ExecPin open /></PinRow>
                  <PinRow><Pin><ArrayIcon />Definitions</Pin><ArrayIcon hollow /></PinRow>
                </SetNode>
                <VarNode $x={512} $y={234} $w={172}>Vehicles<ArrayIcon /></VarNode>

                <NoteFrame $x={469} $y={215} $w={242} $h={122} />
                <NoteText $x={748} $y={315}>选中</NoteText>
                <NoteText $x={867} $y={676}>{'上面点击加号新增资产\nmake和model根据自己的需求来填写，\n你可以分别写SimpleCar和01'}</NoteText>
                <Mark>蓝图</Mark>
              </GraphFrame>
            </Panel>

            <Panel $h={255}>
              <TabStrip><PanelTab icon={<LogIcon />} title="编译器结果" /></TabStrip>
              <LogBody>
                <LogArea />
                <ClearButton>清除</ClearButton>
              </LogBody>
            </Panel>
          </Column>

          <Column>
            <Panel $grow>
              <TabStrip><PanelTab icon={<InfoIcon />} title="细节" /></TabStrip>
              <PanelBody>
                <DetailsBar>
                  <Search hint="搜索详情" />
                  <ToggleButton aria-label="属性矩阵"><GridIcon /></ToggleButton>
                  <EyeButton aria-label="视图选项"><Eye /><Caret size={10} color="#d8d8d8" /></EyeButton>
                </DetailsBar>
                <Scroller>
                  <Props>
                    {collapsed.map((n) => <MemberRow key={n} index={n} />)}
                    <MemberRow index={40} open />
                    <TextRow name="Make" value="SimpleCar" />
                    <TextRow name="Model" value="SimpleCar" />
                    <PropRow $h={35}>
                      <NameCell htmlFor="class">Class</NameCell>
                      <ClassCell>
                        <SelectBox $w={104} $h={24} $shade>
                          <select id="class" defaultValue="bp"><option value="bp">BP_simpleCar</option></select>
                          <Caret size={10} color="#0c0c0c" />
                        </SelectBox>
                        <ActionCell $pad={0}>
                          <button aria-label="使用所选"><UseArrow /></button>
                          <button aria-label="浏览到"><Magnifier size={15} color="#bdbdbd" width={2} /></button>
                          <button aria-label="新建"><Plus color="#dcdcdc" /></button>
                          <button aria-label="清除"><Cross size={15} color="#dcdcdc" width={3} /></button>
                        </ActionCell>
                      </ClassCell>
                    </PropRow>
                    <TextRow name="Number Of Wheels" value="4" numeric />
                    <TextRow name="Generation" value="0" numeric />
                    <TextRow name="Object Type" />
                    <TextRow name="Base Type" />
                    <TextRow name="Special Type" />
                    <CheckRow name="Has Dynamic Doors" />
                    <CheckRow name="Has Lights" />
                    <ArrayRow name="Recommended Colors" />
                    <ArrayRow name="Supported Drivers" />
                    <MemberRow index={41} />
                    <MemberRow index={42} lit />
                  </Props>
                  <Track><Thumb /></Track>
                </Scroller>
              </PanelBody>
            </Panel>
          </Column>
        </Workspace>
        <BottomStrip />

        <NoteFrame $x={2089} $y={935} $w={333} $h={107} />
        <NoteArrow width="392" height="18" viewBox="0 0 392 18">
          <path d="M0 9L17 1V5.5L392 12L17 13V17z" fill="#ff3535" />
        </NoteArrow>
        <Watermark>CSDN @噫吁嘻嘻嘻嘻</Watermark>
      </Window>
    </>
  );
}
